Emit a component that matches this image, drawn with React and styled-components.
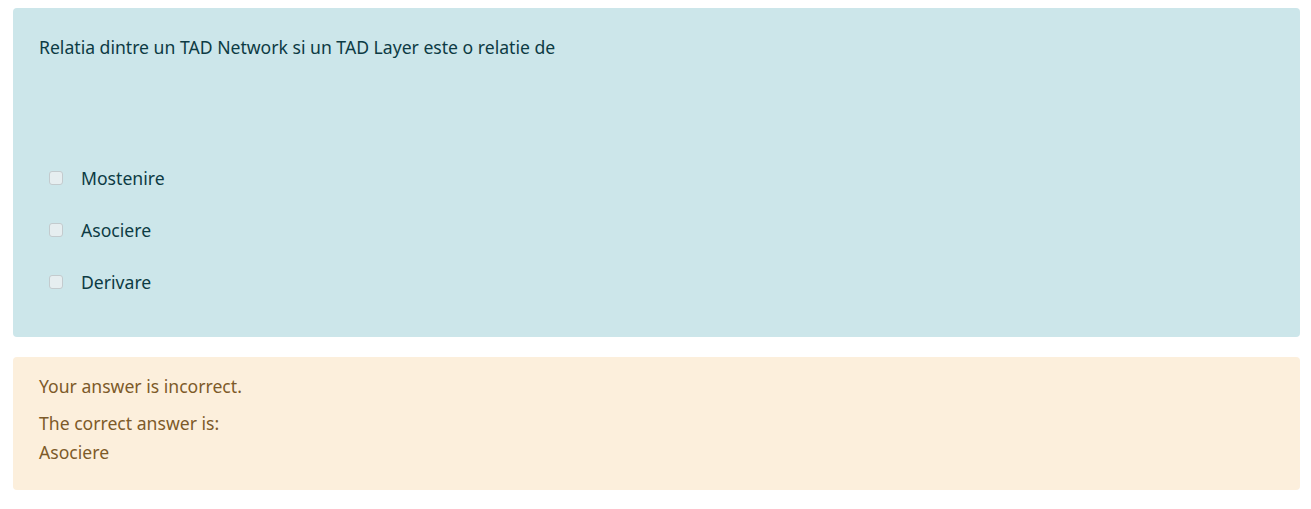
import React from "react";
import styled, { createGlobalStyle } from "styled-components";

const Global = createGlobalStyle`
  html, body { margin: 0; padding: 0; background: #fff; }
  body { font-family: "Noto Sans", "Open Sans", sans-serif; font-size: 17.6px; }
`;

const Page = styled.div`
  padding: 8px 11px 0 13px;
  display: flex;
  flex-direction: column;
  gap: 20px;
`;

const Box = styled.div`
  border-radius: 4px;
  background: ${(p) => (p.$tone === "info" ? "#cce6ea" : "#fcefdc")};
  color: ${(p) => (p.$tone === "info" ? "#0c3b44" : "#7d5a29")};
  padding: ${(p) => p.$pad};
`;

const Question = styled.div`
  line-height: 22px;
  margin-bottom: 109px;
`;

const Options = styled.div`
  display: flex;
  flex-direction: column;
  gap: 30px;
`;

const Option = styled.label`
  display: flex;
  align-items: center;
  height: 22px;
  line-height: 22px;
  padding-left: 10px;
`;

const Check = styled.span`
  width: 14px;
  height: 14px;
  box-sizing: border-box;
  border: 1px solid #c3cbce;
  border-radius: 3px;
  background: #e6eef0;
  margin-right: 18px;
  flex: none;
`;

const Line = styled.div`
  line-height: 22px;
  margin-bottom: ${(p) => p.$mb || 0}px;
`;

export default function App() {
  return (
    <>
      <Global />
      <Page>
        <Box $tone="info" $pad="28px 26px 44px 26px">
          <Question>Relatia dintre un TAD Network si un TAD Layer este o relatie de</Question>
          <Options>
            {["Mostenire", "Asociere", "Derivare"].map((o) => (
              <Option key={o}>
                <Check />
                {o}
              </Option>
            ))}
          </Options>
        </Box>
        <Box $tone="warn" $pad="18px 26px 27px 26px">
          <Line $mb={15}>Your answer is incorrect.</Line>
          <Line $mb={7}>The correct answer is:</Line>
          <Line>Asociere</Line>
        </Box>
      </Page>
    </>
  );
}
